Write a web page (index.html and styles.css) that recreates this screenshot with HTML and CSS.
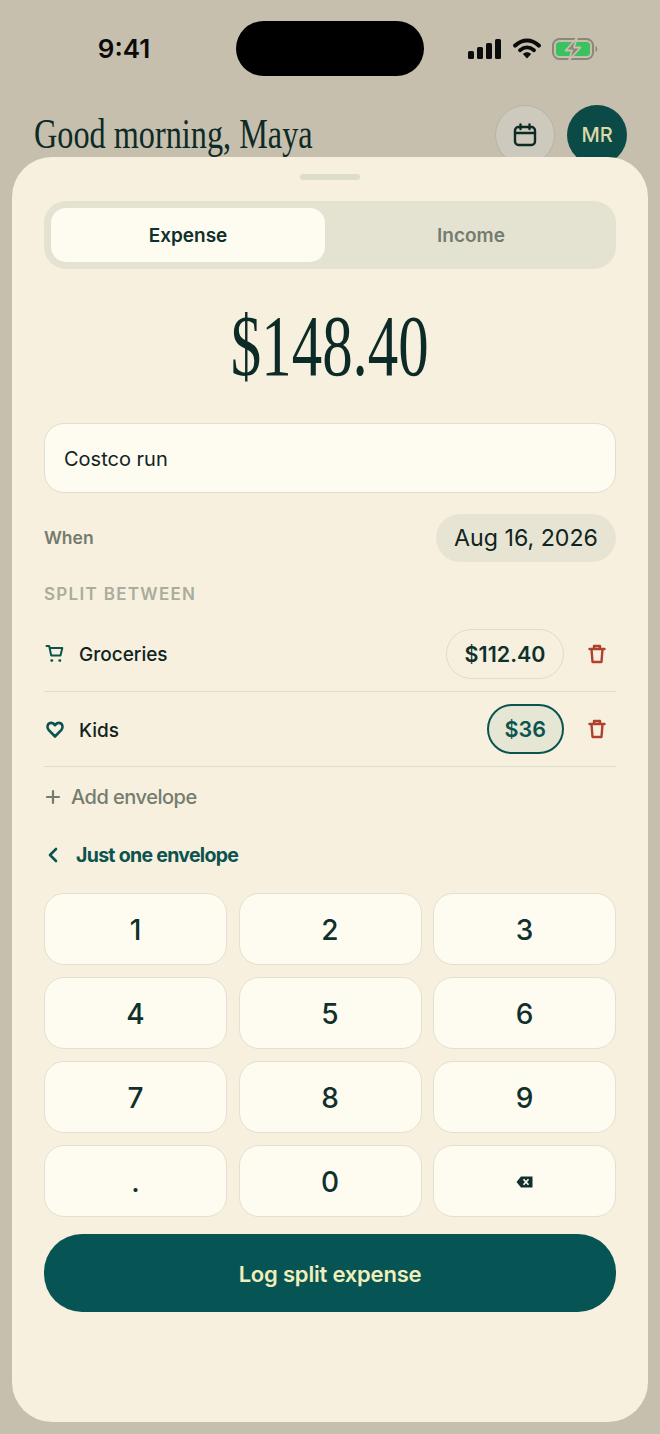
FILE: index.html
```html
<!DOCTYPE html>
<html lang="en">
<head>
<meta charset="utf-8">
<title>Log expense</title>
<link rel="stylesheet" href="styles.css">
</head>
<body>
<div class="screen">
  <div class="status">
    <span class="time">9:41</span>
    <span class="island"></span>
    <span class="status-icons">
      <svg class="sig" width="34" height="20" viewBox="0 0 34 20"><rect x="0" y="12" width="6" height="8" rx="1.5"/><rect x="9" y="8" width="6" height="12" rx="1.5"/><rect x="18" y="4" width="6" height="16" rx="1.5"/><rect x="27" y="0" width="6" height="20" rx="1.5"/></svg>
      <svg class="wifi" width="28" height="21" viewBox="0 0 28 21"><path d="M2.200 7.500C9.500 .800 18.500 .800 25.800 7.500" fill="none" stroke="#0b0b0b" stroke-width="4.200" stroke-linecap="round"/><path d="M7 12.300C11.500 8.500 16.500 8.500 21 12.300" fill="none" stroke="#0b0b0b" stroke-width="3.800" stroke-linecap="round"/><path d="M9.800 16C12.400 13.600 15.600 13.600 18.200 16L14 20.500Z" fill="#0b0b0b"/></svg>
      <svg class="batt" width="46" height="22" viewBox="0 0 46 22"><rect x="1" y="1" width="40" height="20" rx="6.500" fill="none" stroke="#8b8779" stroke-width="2"/><rect x="4" y="4" width="34" height="14" rx="3.500" fill="#39c25f"/><path d="M43.500 8v6c1.300-.6 1.800-1.500 1.800-3s-.5-2.400-1.800-3Z" fill="#8b8779"/><path d="M25 0 13.500 12.500h6.500L17 22 28.500 9.500H22Z" fill="#8b8779" stroke="#c6bfae" stroke-width="1.800" stroke-linejoin="round"/></svg>
    </span>
  </div>

  <header class="top">
    <h1 class="greet">Good morning, Maya</h1>
    <div class="top-actions">
      <button class="circle circle-cal">
        <svg width="24" height="24" viewBox="0 0 24 24" fill="none" stroke="#0f2a26" stroke-width="2.400" stroke-linecap="round" stroke-linejoin="round"><rect x="2" y="4" width="20" height="18" rx="3.500"/><path d="M2 10h20M7.500 1.500v4.500M16.500 1.500v4.500"/></svg>
      </button>
      <span class="circle circle-me">MR</span>
    </div>
  </header>

  <main class="sheet">
    <div class="grip"></div>

    <div class="seg">
      <span class="seg-item seg-on">Expense</span>
      <span class="seg-item seg-off">Income</span>
    </div>

    <div class="amount"><span>$148.40</span></div>

    <div class="note">Costco run</div>

    <div class="when">
      <span class="when-label">When</span>
      <span class="when-date">Aug 16, 2026</span>
    </div>

    <div class="section-label">SPLIT BETWEEN</div>

    <div class="row">
      <svg class="row-icon" width="20" height="20" viewBox="0 0 20 20" fill="none" stroke="#0b534f" stroke-width="2" stroke-linecap="round" stroke-linejoin="round"><path d="M1.500 2h2.700l2 9.500h9.300l1.800-7.500H4.700"/><path d="M6.500 16.500h.6M14.500 16.500h.6" stroke-width="2.400"/></svg>
      <span class="row-name">Groceries</span>
      <span class="chip">$112.40</span>
      <svg class="trash" width="18" height="20" viewBox="0 0 18 20" fill="none" stroke="#b0402c" stroke-width="2.400" stroke-linecap="round" stroke-linejoin="round"><path d="M1.500 5h15M6 4.500V2h6v2.500M3.500 5l1 13h9l1-13"/></svg>
    </div>
    <div class="row">
      <svg class="row-icon" width="20" height="20" viewBox="0 0 20 20" fill="none" stroke="#0b534f" stroke-width="2.600" stroke-linejoin="round"><path d="M10 17.500 3.600 10.800C1.500 8.500 2.300 4.300 5.900 3.900 7.600 3.700 9 4.600 10 6.200 11 4.600 12.400 3.700 14.100 3.900 17.700 4.300 18.500 8.500 16.400 10.800Z"/></svg>
      <span class="row-name">Kids</span>
      <span class="chip chip-active">$36</span>
      <svg class="trash" width="18" height="20" viewBox="0 0 18 20" fill="none" stroke="#b0402c" stroke-width="2.400" stroke-linecap="round" stroke-linejoin="round"><path d="M1.500 5h15M6 4.500V2h6v2.500M3.500 5l1 13h9l1-13"/></svg>
    </div>

    <div class="add">
      <svg width="18" height="18" viewBox="0 0 18 18" fill="none" stroke="#747c6f" stroke-width="2.200" stroke-linecap="round"><path d="M9 3v12M3 9h12"/></svg>
      <span>Add envelope</span>
    </div>

    <div class="back">
      <svg width="18" height="18" viewBox="0 0 18 18" fill="none" stroke="#0b534f" stroke-width="2.600" stroke-linecap="round" stroke-linejoin="round"><path d="M12 3 6 9l6 6"/></svg>
      <span>Just one envelope</span>
    </div>

    <div class="keys">
      <span class="key">1</span><span class="key">2</span><span class="key">3</span>
      <span class="key">4</span><span class="key">5</span><span class="key">6</span>
      <span class="key">7</span><span class="key">8</span><span class="key">9</span>
      <span class="key">.</span><span class="key">0</span>
      <span class="key"><svg width="17" height="12" viewBox="0 0 17 12"><path d="M5 .5H16.500V11.500H5L.5 6Z" fill="#10302c"/><path d="M7.500 3.200l5 5.600M12.500 3.200l-5 5.600" stroke="#fefcf1" stroke-width="1.700"/></svg></span>
    </div>

    <button class="submit">Log split expense</button>
  </main>
</div>
</body>
</html>
```
FILE: styles.css
```css
* { box-sizing: border-box; }

html, body {
  margin: 0;
  padding: 0;
}

body {
  font-family: "Inter", "Liberation Sans", sans-serif;
  color: #10241f;
  background: #c6bfae;
}

.screen {
  width: 660px;
  height: 1434px;
  overflow: hidden;
  background: #c6bfae;
  padding-top: 21px;
}

/* status bar */
.status {
  display: grid;
  grid-template-columns: 236px 188px 236px;
  height: 55px;
  align-items: center;
}

.time {
  font-size: 26px;
  font-weight: 600;
  color: #0b0b0b;
  text-align: center;
  padding-left: 12px;
  padding-bottom: 1px;
}

.island {
  display: block;
  height: 55px;
  border-radius: 28px;
  background: #000;
}

.status-icons {
  display: flex;
  align-items: center;
  padding-left: 44px;
}

.sig { fill: #0b0b0b; }
.wifi { margin-left: 11px; }
.batt { margin-left: 11px; }

/* greeting row */
.top {
  display: flex;
  align-items: flex-start;
  justify-content: space-between;
  margin-top: 29px;
  padding: 0 33px 0 34px;
  height: 60px;
}

.greet {
  margin: 7px 0 0;
  font-family: "Liberation Serif", serif;
  font-weight: 400;
  font-size: 42px;
  line-height: 44px;
  white-space: nowrap;
  color: #0d2b26;
  transform: scaleX(0.768);
  transform-origin: left center;
}

.top-actions {
  display: flex;
  gap: 12px;
}

.circle {
  display: flex;
  align-items: center;
  justify-content: center;
  width: 60px;
  height: 60px;
  border-radius: 50%;
  padding: 0;
}

.circle-cal {
  background: #cdcabd;
  border: 1.500px solid #b6b4a3;
}

.circle-me {
  background: #0b4a47;
  color: #dcd9a8;
  font-size: 20px;
  font-weight: 500;
}

/* bottom sheet */
.sheet {
  position: relative;
  margin: -8px 12px 0;
  height: 1265px;
  padding: 17px 32px 0;
  border-radius: 40px;
  background: #f7f0de;
}

.grip {
  width: 60px;
  height: 6px;
  margin: 0 auto 21px;
  border-radius: 3px;
  background: #dcdecb;
}

.seg {
  display: grid;
  grid-template-columns: 274px 1fr;
  height: 68px;
  padding: 7px;
  border-radius: 22px;
  background: #e4e3d1;
}

.seg-item {
  display: flex;
  align-items: center;
  justify-content: center;
  font-size: 19px;
  font-weight: 600;
  color: #747c6f;
}

.seg-off { padding-left: 8px; }

.seg-on {
  background: #fefcf1;
  border-radius: 15px;
  color: #10302b;
}

.amount {
  height: 154px;
  display: flex;
  align-items: center;
  justify-content: center;
  font-family: "Liberation Serif", serif;
  font-size: 86px;
  color: #0d2b26;
}

.amount span {
  display: inline-block;
  transform: scaleX(0.708);
}

.note {
  display: flex;
  align-items: center;
  height: 70px;
  padding: 2px 0 0 19px;
  border: 1.500px solid #dfdfcd;
  border-radius: 20px;
  background: #fefcf1;
  font-size: 20px;
  color: #10241f;
}

.when {
  display: flex;
  align-items: center;
  justify-content: space-between;
  margin-top: 21px;
}

.when-label {
  font-size: 17.500px;
  font-weight: 600;
  color: #747c6f;
  padding-bottom: 2px;
}

.when-date {
  display: flex;
  align-items: center;
  height: 48px;
  padding: 0 18px;
  border-radius: 24px;
  background: #e8e4d4;
  font-size: 23.200px;
  color: #10241f;
}

.section-label {
  margin-top: 21px;
  font-size: 17px;
  line-height: 22px;
  font-weight: 600;
  letter-spacing: 1.300px;
  color: #a9ad9c;
}

.row {
  display: flex;
  align-items: center;
  height: 76px;
  border-bottom: 1.500px solid #dcdecb;
}

.row + .row { height: 75px; }

.section-label + .row { margin-top: 11px; }

.row-icon { margin-left: 1px; flex: none; }

.row-name {
  flex: 1;
  margin-left: 14px;
  padding-top: 2px;
  font-size: 19px;
  font-weight: 500;
  color: #10241f;
}

.chip {
  display: flex;
  align-items: center;
  height: 50px;
  padding: 0 17.500px;
  border: 1.500px solid #dcdecb;
  border-radius: 25px;
  font-size: 21.500px;
  font-weight: 600;
  color: #10302b;
}

.chip-active {
  padding: 0 16px;
  border: 2px solid #0b534f;
  background: #e6e6d5;
  color: #0b534f;
}

.trash {
  margin: 0 10px 0 24px;
  flex: none;
}

.add {
  display: flex;
  align-items: center;
  gap: 9px;
  margin-top: 18px;
  font-size: 20px;
  font-weight: 500;
  letter-spacing: -0.500px;
  color: #747c6f;
  line-height: 24px;
}

.back {
  display: flex;
  align-items: center;
  gap: 14px;
  margin-top: 34px;
  font-size: 19.500px;
  font-weight: 700;
  letter-spacing: -0.700px;
  color: #0b534f;
  line-height: 24px;
}

.keys {
  display: grid;
  grid-template-columns: repeat(3, 1fr);
  grid-auto-rows: 72px;
  gap: 12px 11.500px;
  margin-top: 26px;
}

.key {
  display: flex;
  align-items: center;
  justify-content: center;
  padding-top: 2px;
  border: 1.500px solid #e2e1cf;
  border-radius: 20px;
  background: #fefcf1;
  font-size: 28px;
  font-weight: 500;
  color: #10302b;
}

.submit {
  display: block;
  width: 100%;
  height: 78px;
  margin-top: 17px;
  padding-top: 3px;
  border: 0;
  border-radius: 38px;
  background: #065554;
  color: #f1eebc;
  font-family: inherit;
  font-size: 22px;
  font-weight: 600;
  letter-spacing: -0.200px;
}
```
